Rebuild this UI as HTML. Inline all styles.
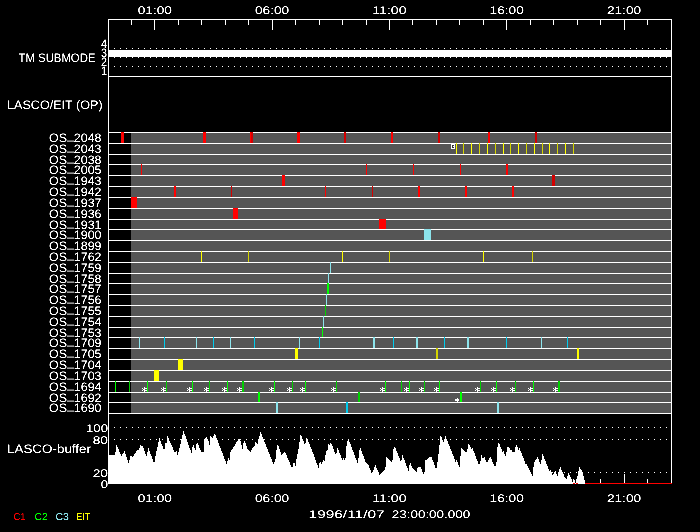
<!DOCTYPE html>
<html><head><meta charset="utf-8"><title>LASCO/EIT plan</title>
<style>html,body{margin:0;padding:0;background:#000;overflow:hidden}svg{display:block;will-change:transform}text{font-family:"Liberation Sans",sans-serif;text-rendering:geometricPrecision}</style></head>
<body><svg width="700" height="532" viewBox="0 0 700 532">
<rect width="700" height="532" fill="#000"/>
<g shape-rendering="crispEdges">
<rect x="131" y="132" width="540" height="281" fill="#555555"/>
<rect x="108" y="132" width="564" height="1" fill="#fff"/>
<rect x="108" y="143" width="564" height="1" fill="#fff"/>
<rect x="108" y="154" width="564" height="1" fill="#fff"/>
<rect x="108" y="164" width="564" height="1" fill="#fff"/>
<rect x="108" y="175" width="564" height="1" fill="#fff"/>
<rect x="108" y="186" width="564" height="1" fill="#fff"/>
<rect x="108" y="197" width="564" height="1" fill="#fff"/>
<rect x="108" y="208" width="564" height="1" fill="#fff"/>
<rect x="108" y="219" width="564" height="1" fill="#fff"/>
<rect x="108" y="229" width="564" height="1" fill="#fff"/>
<rect x="108" y="240" width="564" height="1" fill="#fff"/>
<rect x="108" y="251" width="564" height="1" fill="#fff"/>
<rect x="108" y="262" width="564" height="1" fill="#fff"/>
<rect x="108" y="273" width="564" height="1" fill="#fff"/>
<rect x="108" y="283" width="564" height="1" fill="#fff"/>
<rect x="108" y="294" width="564" height="1" fill="#fff"/>
<rect x="108" y="305" width="564" height="1" fill="#fff"/>
<rect x="108" y="316" width="564" height="1" fill="#fff"/>
<rect x="108" y="327" width="564" height="1" fill="#fff"/>
<rect x="108" y="337" width="564" height="1" fill="#fff"/>
<rect x="108" y="348" width="564" height="1" fill="#fff"/>
<rect x="108" y="359" width="564" height="1" fill="#fff"/>
<rect x="108" y="370" width="564" height="1" fill="#fff"/>
<rect x="108" y="381" width="564" height="1" fill="#fff"/>
<rect x="108" y="392" width="564" height="1" fill="#fff"/>
<rect x="108" y="402" width="564" height="1" fill="#fff"/>
<rect x="108" y="413" width="564" height="1" fill="#fff"/>
<rect x="121" y="132" width="3" height="11" fill="#ff0000"/>
<rect x="203" y="132" width="3" height="11" fill="#ff0000"/>
<rect x="250" y="132" width="1" height="11" fill="#ff0000"/>
<rect x="251" y="132" width="2" height="11" fill="#d40000"/>
<rect x="297" y="132" width="3" height="11" fill="#ff0000"/>
<rect x="344" y="132" width="2" height="11" fill="#d40000"/>
<rect x="391" y="132" width="2" height="11" fill="#ff0000"/>
<rect x="438" y="132" width="2" height="11" fill="#d40000"/>
<rect x="488" y="132" width="2" height="11" fill="#ff0000"/>
<rect x="535" y="132" width="2" height="11" fill="#d40000"/>
<rect x="141" y="164" width="1" height="11" fill="#ff0000"/>
<rect x="366" y="164" width="1" height="11" fill="#ff0000"/>
<rect x="413" y="164" width="1" height="11" fill="#ff0000"/>
<rect x="460" y="164" width="1" height="11" fill="#ff0000"/>
<rect x="506" y="164" width="2" height="11" fill="#ff0000"/>
<rect x="282" y="175" width="3" height="11" fill="#ff0000"/>
<rect x="552" y="175" width="3" height="11" fill="#d40000"/>
<rect x="174" y="186" width="2" height="11" fill="#ff0000"/>
<rect x="231" y="186" width="1" height="11" fill="#d40000"/>
<rect x="325" y="186" width="1" height="11" fill="#ff0000"/>
<rect x="372" y="186" width="1" height="11" fill="#d40000"/>
<rect x="418" y="186" width="2" height="11" fill="#ff0000"/>
<rect x="465" y="186" width="2" height="11" fill="#ff0000"/>
<rect x="512" y="186" width="2" height="11" fill="#ff0000"/>
<rect x="131" y="197" width="6" height="11" fill="#ff0000"/>
<rect x="233" y="208" width="5" height="11" fill="#ff0000"/>
<rect x="379" y="219" width="7" height="10" fill="#ff0000"/>
<rect x="424" y="229" width="7" height="11" fill="#8ce4ec"/>
<rect x="201" y="251" width="1" height="11" fill="#ffff00"/>
<rect x="248" y="251" width="1" height="11" fill="#d4d400"/>
<rect x="342" y="251" width="1" height="11" fill="#ffff00"/>
<rect x="389" y="251" width="1" height="11" fill="#d4d400"/>
<rect x="483" y="251" width="1" height="11" fill="#ffff00"/>
<rect x="532" y="251" width="1" height="11" fill="#d4d400"/>
<rect x="330" y="262" width="1" height="11" fill="#8ce4ec"/>
<rect x="328" y="273" width="1" height="10" fill="#8ce4ec"/>
<rect x="327" y="283" width="2" height="11" fill="#00ff00"/>
<rect x="326" y="294" width="1" height="11" fill="#8ce4ec"/>
<rect x="325" y="305" width="1" height="11" fill="#00d000"/>
<rect x="323" y="316" width="1" height="11" fill="#8ce4ec"/>
<rect x="322" y="327" width="1" height="10" fill="#00ff00"/>
<rect x="139" y="337" width="1" height="11" fill="#8ce4ec"/>
<rect x="164" y="337" width="1" height="11" fill="#00ccee"/>
<rect x="196" y="337" width="1" height="11" fill="#8ce4ec"/>
<rect x="213" y="337" width="1" height="11" fill="#00ccee"/>
<rect x="230" y="337" width="1" height="11" fill="#8ce4ec"/>
<rect x="254" y="337" width="1" height="11" fill="#00ccee"/>
<rect x="299" y="337" width="1" height="11" fill="#8ce4ec"/>
<rect x="319" y="337" width="1" height="11" fill="#00ccee"/>
<rect x="373" y="337" width="2" height="11" fill="#8ce4ec"/>
<rect x="393" y="337" width="1" height="11" fill="#00ccee"/>
<rect x="416" y="337" width="2" height="11" fill="#8ce4ec"/>
<rect x="444" y="337" width="1" height="11" fill="#00ccee"/>
<rect x="467" y="337" width="2" height="11" fill="#8ce4ec"/>
<rect x="506" y="337" width="1" height="11" fill="#00ccee"/>
<rect x="541" y="337" width="1" height="11" fill="#8ce4ec"/>
<rect x="567" y="337" width="1" height="11" fill="#00ccee"/>
<rect x="295" y="348" width="3" height="11" fill="#ffff00"/>
<rect x="436" y="348" width="2" height="11" fill="#d4d400"/>
<rect x="577" y="348" width="2" height="11" fill="#ffff00"/>
<rect x="178" y="359" width="5" height="11" fill="#ffff00"/>
<rect x="154" y="370" width="5" height="11" fill="#ffff00"/>
<rect x="258" y="392" width="2" height="10" fill="#00ff00"/>
<rect x="358" y="392" width="2" height="10" fill="#00d000"/>
<rect x="460" y="392" width="2" height="10" fill="#00ff00"/>
<rect x="276" y="402" width="2" height="11" fill="#8ce4ec"/>
<rect x="346" y="402" width="2" height="11" fill="#00ccee"/>
<rect x="497" y="402" width="2" height="11" fill="#8ce4ec"/>
<rect x="456" y="143" width="1" height="11" fill="#ffff00"/>
<rect x="463" y="143" width="1" height="11" fill="#d4d400"/>
<rect x="471" y="143" width="1" height="11" fill="#ffff00"/>
<rect x="479" y="143" width="1" height="11" fill="#d4d400"/>
<rect x="487" y="143" width="1" height="11" fill="#ffff00"/>
<rect x="495" y="143" width="1" height="11" fill="#d4d400"/>
<rect x="503" y="143" width="1" height="11" fill="#ffff00"/>
<rect x="510" y="143" width="1" height="11" fill="#d4d400"/>
<rect x="518" y="143" width="1" height="11" fill="#ffff00"/>
<rect x="526" y="143" width="1" height="11" fill="#d4d400"/>
<rect x="534" y="143" width="1" height="11" fill="#ffff00"/>
<rect x="542" y="143" width="1" height="11" fill="#d4d400"/>
<rect x="549" y="143" width="1" height="11" fill="#ffff00"/>
<rect x="557" y="143" width="1" height="11" fill="#d4d400"/>
<rect x="565" y="143" width="1" height="11" fill="#ffff00"/>
<rect x="573" y="143" width="1" height="11" fill="#d4d400"/>
<rect x="115" y="381" width="1" height="11" fill="#00ff00"/>
<rect x="129" y="381" width="1" height="11" fill="#00d000"/>
<rect x="147" y="381" width="1" height="11" fill="#00ff00"/>
<rect x="166" y="381" width="1" height="11" fill="#00d000"/>
<rect x="192" y="381" width="1" height="11" fill="#00ff00"/>
<rect x="209" y="381" width="1" height="11" fill="#00d000"/>
<rect x="227" y="381" width="1" height="11" fill="#00ff00"/>
<rect x="242" y="381" width="2" height="11" fill="#00d000"/>
<rect x="274" y="381" width="1" height="11" fill="#00ff00"/>
<rect x="292" y="381" width="1" height="11" fill="#00d000"/>
<rect x="305" y="381" width="1" height="11" fill="#00ff00"/>
<rect x="336" y="381" width="1" height="11" fill="#00d000"/>
<rect x="385" y="381" width="1" height="11" fill="#00ff00"/>
<rect x="401" y="381" width="1" height="11" fill="#00d000"/>
<rect x="409" y="381" width="1" height="11" fill="#00ff00"/>
<rect x="424" y="381" width="1" height="11" fill="#00d000"/>
<rect x="439" y="381" width="1" height="11" fill="#00ff00"/>
<rect x="480" y="381" width="1" height="11" fill="#00d000"/>
<rect x="496" y="381" width="1" height="11" fill="#00ff00"/>
<rect x="515" y="381" width="1" height="11" fill="#00d000"/>
<rect x="533" y="381" width="1" height="11" fill="#00ff00"/>
<rect x="558" y="381" width="2" height="11" fill="#00d000"/>
<rect x="144" y="387" width="1" height="1" fill="#fff"/>
<rect x="142" y="388" width="1" height="1" fill="#fff"/>
<rect x="144" y="388" width="1" height="1" fill="#fff"/>
<rect x="145" y="388" width="1" height="1" fill="#fff"/>
<rect x="146" y="388" width="1" height="1" fill="#fff"/>
<rect x="143" y="389" width="1" height="1" fill="#fff"/>
<rect x="144" y="389" width="1" height="1" fill="#fff"/>
<rect x="142" y="390" width="1" height="1" fill="#fff"/>
<rect x="144" y="390" width="1" height="1" fill="#fff"/>
<rect x="145" y="390" width="1" height="1" fill="#fff"/>
<rect x="146" y="390" width="1" height="1" fill="#fff"/>
<rect x="144" y="391" width="1" height="1" fill="#fff"/>
<rect x="163" y="387" width="1" height="1" fill="#fff"/>
<rect x="161" y="388" width="1" height="1" fill="#fff"/>
<rect x="163" y="388" width="1" height="1" fill="#fff"/>
<rect x="164" y="388" width="1" height="1" fill="#fff"/>
<rect x="165" y="388" width="1" height="1" fill="#fff"/>
<rect x="162" y="389" width="1" height="1" fill="#fff"/>
<rect x="163" y="389" width="1" height="1" fill="#fff"/>
<rect x="161" y="390" width="1" height="1" fill="#fff"/>
<rect x="163" y="390" width="1" height="1" fill="#fff"/>
<rect x="164" y="390" width="1" height="1" fill="#fff"/>
<rect x="165" y="390" width="1" height="1" fill="#fff"/>
<rect x="163" y="391" width="1" height="1" fill="#fff"/>
<rect x="189" y="387" width="1" height="1" fill="#fff"/>
<rect x="187" y="388" width="1" height="1" fill="#fff"/>
<rect x="189" y="388" width="1" height="1" fill="#fff"/>
<rect x="190" y="388" width="1" height="1" fill="#fff"/>
<rect x="191" y="388" width="1" height="1" fill="#fff"/>
<rect x="188" y="389" width="1" height="1" fill="#fff"/>
<rect x="189" y="389" width="1" height="1" fill="#fff"/>
<rect x="187" y="390" width="1" height="1" fill="#fff"/>
<rect x="189" y="390" width="1" height="1" fill="#fff"/>
<rect x="190" y="390" width="1" height="1" fill="#fff"/>
<rect x="191" y="390" width="1" height="1" fill="#fff"/>
<rect x="189" y="391" width="1" height="1" fill="#fff"/>
<rect x="206" y="387" width="1" height="1" fill="#fff"/>
<rect x="204" y="388" width="1" height="1" fill="#fff"/>
<rect x="206" y="388" width="1" height="1" fill="#fff"/>
<rect x="207" y="388" width="1" height="1" fill="#fff"/>
<rect x="208" y="388" width="1" height="1" fill="#fff"/>
<rect x="205" y="389" width="1" height="1" fill="#fff"/>
<rect x="206" y="389" width="1" height="1" fill="#fff"/>
<rect x="204" y="390" width="1" height="1" fill="#fff"/>
<rect x="206" y="390" width="1" height="1" fill="#fff"/>
<rect x="207" y="390" width="1" height="1" fill="#fff"/>
<rect x="208" y="390" width="1" height="1" fill="#fff"/>
<rect x="206" y="391" width="1" height="1" fill="#fff"/>
<rect x="224" y="387" width="1" height="1" fill="#fff"/>
<rect x="222" y="388" width="1" height="1" fill="#fff"/>
<rect x="224" y="388" width="1" height="1" fill="#fff"/>
<rect x="225" y="388" width="1" height="1" fill="#fff"/>
<rect x="226" y="388" width="1" height="1" fill="#fff"/>
<rect x="223" y="389" width="1" height="1" fill="#fff"/>
<rect x="224" y="389" width="1" height="1" fill="#fff"/>
<rect x="222" y="390" width="1" height="1" fill="#fff"/>
<rect x="224" y="390" width="1" height="1" fill="#fff"/>
<rect x="225" y="390" width="1" height="1" fill="#fff"/>
<rect x="226" y="390" width="1" height="1" fill="#fff"/>
<rect x="224" y="391" width="1" height="1" fill="#fff"/>
<rect x="239" y="387" width="1" height="1" fill="#fff"/>
<rect x="237" y="388" width="1" height="1" fill="#fff"/>
<rect x="239" y="388" width="1" height="1" fill="#fff"/>
<rect x="240" y="388" width="1" height="1" fill="#fff"/>
<rect x="241" y="388" width="1" height="1" fill="#fff"/>
<rect x="238" y="389" width="1" height="1" fill="#fff"/>
<rect x="239" y="389" width="1" height="1" fill="#fff"/>
<rect x="237" y="390" width="1" height="1" fill="#fff"/>
<rect x="239" y="390" width="1" height="1" fill="#fff"/>
<rect x="240" y="390" width="1" height="1" fill="#fff"/>
<rect x="241" y="390" width="1" height="1" fill="#fff"/>
<rect x="239" y="391" width="1" height="1" fill="#fff"/>
<rect x="271" y="387" width="1" height="1" fill="#fff"/>
<rect x="269" y="388" width="1" height="1" fill="#fff"/>
<rect x="271" y="388" width="1" height="1" fill="#fff"/>
<rect x="272" y="388" width="1" height="1" fill="#fff"/>
<rect x="273" y="388" width="1" height="1" fill="#fff"/>
<rect x="270" y="389" width="1" height="1" fill="#fff"/>
<rect x="271" y="389" width="1" height="1" fill="#fff"/>
<rect x="269" y="390" width="1" height="1" fill="#fff"/>
<rect x="271" y="390" width="1" height="1" fill="#fff"/>
<rect x="272" y="390" width="1" height="1" fill="#fff"/>
<rect x="273" y="390" width="1" height="1" fill="#fff"/>
<rect x="271" y="391" width="1" height="1" fill="#fff"/>
<rect x="289" y="387" width="1" height="1" fill="#fff"/>
<rect x="287" y="388" width="1" height="1" fill="#fff"/>
<rect x="289" y="388" width="1" height="1" fill="#fff"/>
<rect x="290" y="388" width="1" height="1" fill="#fff"/>
<rect x="291" y="388" width="1" height="1" fill="#fff"/>
<rect x="288" y="389" width="1" height="1" fill="#fff"/>
<rect x="289" y="389" width="1" height="1" fill="#fff"/>
<rect x="287" y="390" width="1" height="1" fill="#fff"/>
<rect x="289" y="390" width="1" height="1" fill="#fff"/>
<rect x="290" y="390" width="1" height="1" fill="#fff"/>
<rect x="291" y="390" width="1" height="1" fill="#fff"/>
<rect x="289" y="391" width="1" height="1" fill="#fff"/>
<rect x="302" y="387" width="1" height="1" fill="#fff"/>
<rect x="300" y="388" width="1" height="1" fill="#fff"/>
<rect x="302" y="388" width="1" height="1" fill="#fff"/>
<rect x="303" y="388" width="1" height="1" fill="#fff"/>
<rect x="304" y="388" width="1" height="1" fill="#fff"/>
<rect x="301" y="389" width="1" height="1" fill="#fff"/>
<rect x="302" y="389" width="1" height="1" fill="#fff"/>
<rect x="300" y="390" width="1" height="1" fill="#fff"/>
<rect x="302" y="390" width="1" height="1" fill="#fff"/>
<rect x="303" y="390" width="1" height="1" fill="#fff"/>
<rect x="304" y="390" width="1" height="1" fill="#fff"/>
<rect x="302" y="391" width="1" height="1" fill="#fff"/>
<rect x="333" y="387" width="1" height="1" fill="#fff"/>
<rect x="331" y="388" width="1" height="1" fill="#fff"/>
<rect x="333" y="388" width="1" height="1" fill="#fff"/>
<rect x="334" y="388" width="1" height="1" fill="#fff"/>
<rect x="335" y="388" width="1" height="1" fill="#fff"/>
<rect x="332" y="389" width="1" height="1" fill="#fff"/>
<rect x="333" y="389" width="1" height="1" fill="#fff"/>
<rect x="331" y="390" width="1" height="1" fill="#fff"/>
<rect x="333" y="390" width="1" height="1" fill="#fff"/>
<rect x="334" y="390" width="1" height="1" fill="#fff"/>
<rect x="335" y="390" width="1" height="1" fill="#fff"/>
<rect x="333" y="391" width="1" height="1" fill="#fff"/>
<rect x="382" y="387" width="1" height="1" fill="#fff"/>
<rect x="380" y="388" width="1" height="1" fill="#fff"/>
<rect x="382" y="388" width="1" height="1" fill="#fff"/>
<rect x="383" y="388" width="1" height="1" fill="#fff"/>
<rect x="384" y="388" width="1" height="1" fill="#fff"/>
<rect x="381" y="389" width="1" height="1" fill="#fff"/>
<rect x="382" y="389" width="1" height="1" fill="#fff"/>
<rect x="380" y="390" width="1" height="1" fill="#fff"/>
<rect x="382" y="390" width="1" height="1" fill="#fff"/>
<rect x="383" y="390" width="1" height="1" fill="#fff"/>
<rect x="384" y="390" width="1" height="1" fill="#fff"/>
<rect x="382" y="391" width="1" height="1" fill="#fff"/>
<rect x="406" y="387" width="1" height="1" fill="#fff"/>
<rect x="404" y="388" width="1" height="1" fill="#fff"/>
<rect x="406" y="388" width="1" height="1" fill="#fff"/>
<rect x="407" y="388" width="1" height="1" fill="#fff"/>
<rect x="408" y="388" width="1" height="1" fill="#fff"/>
<rect x="405" y="389" width="1" height="1" fill="#fff"/>
<rect x="406" y="389" width="1" height="1" fill="#fff"/>
<rect x="404" y="390" width="1" height="1" fill="#fff"/>
<rect x="406" y="390" width="1" height="1" fill="#fff"/>
<rect x="407" y="390" width="1" height="1" fill="#fff"/>
<rect x="408" y="390" width="1" height="1" fill="#fff"/>
<rect x="406" y="391" width="1" height="1" fill="#fff"/>
<rect x="421" y="387" width="1" height="1" fill="#fff"/>
<rect x="419" y="388" width="1" height="1" fill="#fff"/>
<rect x="421" y="388" width="1" height="1" fill="#fff"/>
<rect x="422" y="388" width="1" height="1" fill="#fff"/>
<rect x="423" y="388" width="1" height="1" fill="#fff"/>
<rect x="420" y="389" width="1" height="1" fill="#fff"/>
<rect x="421" y="389" width="1" height="1" fill="#fff"/>
<rect x="419" y="390" width="1" height="1" fill="#fff"/>
<rect x="421" y="390" width="1" height="1" fill="#fff"/>
<rect x="422" y="390" width="1" height="1" fill="#fff"/>
<rect x="423" y="390" width="1" height="1" fill="#fff"/>
<rect x="421" y="391" width="1" height="1" fill="#fff"/>
<rect x="436" y="387" width="1" height="1" fill="#fff"/>
<rect x="434" y="388" width="1" height="1" fill="#fff"/>
<rect x="436" y="388" width="1" height="1" fill="#fff"/>
<rect x="437" y="388" width="1" height="1" fill="#fff"/>
<rect x="438" y="388" width="1" height="1" fill="#fff"/>
<rect x="435" y="389" width="1" height="1" fill="#fff"/>
<rect x="436" y="389" width="1" height="1" fill="#fff"/>
<rect x="434" y="390" width="1" height="1" fill="#fff"/>
<rect x="436" y="390" width="1" height="1" fill="#fff"/>
<rect x="437" y="390" width="1" height="1" fill="#fff"/>
<rect x="438" y="390" width="1" height="1" fill="#fff"/>
<rect x="436" y="391" width="1" height="1" fill="#fff"/>
<rect x="477" y="387" width="1" height="1" fill="#fff"/>
<rect x="475" y="388" width="1" height="1" fill="#fff"/>
<rect x="477" y="388" width="1" height="1" fill="#fff"/>
<rect x="478" y="388" width="1" height="1" fill="#fff"/>
<rect x="479" y="388" width="1" height="1" fill="#fff"/>
<rect x="476" y="389" width="1" height="1" fill="#fff"/>
<rect x="477" y="389" width="1" height="1" fill="#fff"/>
<rect x="475" y="390" width="1" height="1" fill="#fff"/>
<rect x="477" y="390" width="1" height="1" fill="#fff"/>
<rect x="478" y="390" width="1" height="1" fill="#fff"/>
<rect x="479" y="390" width="1" height="1" fill="#fff"/>
<rect x="477" y="391" width="1" height="1" fill="#fff"/>
<rect x="493" y="387" width="1" height="1" fill="#fff"/>
<rect x="491" y="388" width="1" height="1" fill="#fff"/>
<rect x="493" y="388" width="1" height="1" fill="#fff"/>
<rect x="494" y="388" width="1" height="1" fill="#fff"/>
<rect x="495" y="388" width="1" height="1" fill="#fff"/>
<rect x="492" y="389" width="1" height="1" fill="#fff"/>
<rect x="493" y="389" width="1" height="1" fill="#fff"/>
<rect x="491" y="390" width="1" height="1" fill="#fff"/>
<rect x="493" y="390" width="1" height="1" fill="#fff"/>
<rect x="494" y="390" width="1" height="1" fill="#fff"/>
<rect x="495" y="390" width="1" height="1" fill="#fff"/>
<rect x="493" y="391" width="1" height="1" fill="#fff"/>
<rect x="512" y="387" width="1" height="1" fill="#fff"/>
<rect x="510" y="388" width="1" height="1" fill="#fff"/>
<rect x="512" y="388" width="1" height="1" fill="#fff"/>
<rect x="513" y="388" width="1" height="1" fill="#fff"/>
<rect x="514" y="388" width="1" height="1" fill="#fff"/>
<rect x="511" y="389" width="1" height="1" fill="#fff"/>
<rect x="512" y="389" width="1" height="1" fill="#fff"/>
<rect x="510" y="390" width="1" height="1" fill="#fff"/>
<rect x="512" y="390" width="1" height="1" fill="#fff"/>
<rect x="513" y="390" width="1" height="1" fill="#fff"/>
<rect x="514" y="390" width="1" height="1" fill="#fff"/>
<rect x="512" y="391" width="1" height="1" fill="#fff"/>
<rect x="530" y="387" width="1" height="1" fill="#fff"/>
<rect x="528" y="388" width="1" height="1" fill="#fff"/>
<rect x="530" y="388" width="1" height="1" fill="#fff"/>
<rect x="531" y="388" width="1" height="1" fill="#fff"/>
<rect x="532" y="388" width="1" height="1" fill="#fff"/>
<rect x="529" y="389" width="1" height="1" fill="#fff"/>
<rect x="530" y="389" width="1" height="1" fill="#fff"/>
<rect x="528" y="390" width="1" height="1" fill="#fff"/>
<rect x="530" y="390" width="1" height="1" fill="#fff"/>
<rect x="531" y="390" width="1" height="1" fill="#fff"/>
<rect x="532" y="390" width="1" height="1" fill="#fff"/>
<rect x="530" y="391" width="1" height="1" fill="#fff"/>
<rect x="555" y="387" width="1" height="1" fill="#fff"/>
<rect x="553" y="388" width="1" height="1" fill="#fff"/>
<rect x="555" y="388" width="1" height="1" fill="#fff"/>
<rect x="556" y="388" width="1" height="1" fill="#fff"/>
<rect x="557" y="388" width="1" height="1" fill="#fff"/>
<rect x="554" y="389" width="1" height="1" fill="#fff"/>
<rect x="555" y="389" width="1" height="1" fill="#fff"/>
<rect x="553" y="390" width="1" height="1" fill="#fff"/>
<rect x="555" y="390" width="1" height="1" fill="#fff"/>
<rect x="556" y="390" width="1" height="1" fill="#fff"/>
<rect x="557" y="390" width="1" height="1" fill="#fff"/>
<rect x="555" y="391" width="1" height="1" fill="#fff"/>
<rect x="451" y="144" width="4" height="5" fill="#fff"/>
<rect x="452" y="145" width="2" height="3" fill="#333"/>
<rect x="453" y="146" width="1" height="1" fill="#fff"/>
<rect x="457" y="398" width="1" height="1" fill="#fff"/>
<rect x="455" y="399" width="1" height="1" fill="#fff"/>
<rect x="456" y="399" width="1" height="1" fill="#fff"/>
<rect x="457" y="399" width="1" height="1" fill="#fff"/>
<rect x="458" y="399" width="1" height="1" fill="#fff"/>
<rect x="455" y="400" width="1" height="1" fill="#fff"/>
<rect x="456" y="400" width="1" height="1" fill="#fff"/>
<rect x="457" y="400" width="1" height="1" fill="#fff"/>
<rect x="458" y="400" width="1" height="1" fill="#fff"/>
<rect x="457" y="401" width="1" height="1" fill="#fff"/>
<rect x="108" y="19" width="1" height="465" fill="#fff"/>
<rect x="671" y="19" width="1" height="465" fill="#fff"/>
<rect x="108" y="19" width="564" height="1" fill="#fff"/>
<rect x="108" y="76" width="564" height="1" fill="#fff"/>
<rect x="131" y="20" width="1" height="5" fill="#fff"/>
<rect x="131" y="479" width="1" height="4" fill="#fff"/>
<rect x="154" y="20" width="1" height="10" fill="#fff"/>
<rect x="154" y="474" width="1" height="9" fill="#fff"/>
<rect x="178" y="20" width="1" height="5" fill="#fff"/>
<rect x="178" y="479" width="1" height="4" fill="#fff"/>
<rect x="201" y="20" width="1" height="5" fill="#fff"/>
<rect x="201" y="479" width="1" height="4" fill="#fff"/>
<rect x="225" y="20" width="1" height="5" fill="#fff"/>
<rect x="225" y="479" width="1" height="4" fill="#fff"/>
<rect x="248" y="20" width="1" height="5" fill="#fff"/>
<rect x="248" y="479" width="1" height="4" fill="#fff"/>
<rect x="272" y="20" width="1" height="10" fill="#fff"/>
<rect x="272" y="474" width="1" height="9" fill="#fff"/>
<rect x="295" y="20" width="1" height="5" fill="#fff"/>
<rect x="295" y="479" width="1" height="4" fill="#fff"/>
<rect x="319" y="20" width="1" height="5" fill="#fff"/>
<rect x="319" y="479" width="1" height="4" fill="#fff"/>
<rect x="342" y="20" width="1" height="5" fill="#fff"/>
<rect x="342" y="479" width="1" height="4" fill="#fff"/>
<rect x="366" y="20" width="1" height="5" fill="#fff"/>
<rect x="366" y="479" width="1" height="4" fill="#fff"/>
<rect x="389" y="20" width="1" height="10" fill="#fff"/>
<rect x="389" y="474" width="1" height="9" fill="#fff"/>
<rect x="412" y="20" width="1" height="5" fill="#fff"/>
<rect x="412" y="479" width="1" height="4" fill="#fff"/>
<rect x="436" y="20" width="1" height="5" fill="#fff"/>
<rect x="436" y="479" width="1" height="4" fill="#fff"/>
<rect x="459" y="20" width="1" height="5" fill="#fff"/>
<rect x="459" y="479" width="1" height="4" fill="#fff"/>
<rect x="483" y="20" width="1" height="5" fill="#fff"/>
<rect x="483" y="479" width="1" height="4" fill="#fff"/>
<rect x="506" y="20" width="1" height="10" fill="#fff"/>
<rect x="506" y="474" width="1" height="9" fill="#fff"/>
<rect x="530" y="20" width="1" height="5" fill="#fff"/>
<rect x="530" y="479" width="1" height="4" fill="#fff"/>
<rect x="553" y="20" width="1" height="5" fill="#fff"/>
<rect x="553" y="479" width="1" height="4" fill="#fff"/>
<rect x="577" y="20" width="1" height="5" fill="#fff"/>
<rect x="577" y="479" width="1" height="4" fill="#fff"/>
<rect x="600" y="20" width="1" height="5" fill="#fff"/>
<rect x="600" y="479" width="1" height="4" fill="#fff"/>
<rect x="624" y="20" width="1" height="10" fill="#fff"/>
<rect x="624" y="474" width="1" height="9" fill="#fff"/>
<rect x="647" y="20" width="1" height="5" fill="#fff"/>
<rect x="647" y="479" width="1" height="4" fill="#fff"/>
<rect x="109" y="50" width="562" height="7" fill="#fff"/>
<rect x="114" y="48" width="1" height="1" fill="#fff"/>
<rect x="114" y="57" width="1" height="1" fill="#fff"/>
<rect x="114" y="66" width="1" height="1" fill="#fff"/>
<rect x="114" y="427" width="1" height="1" fill="#fff"/>
<rect x="114" y="439" width="1" height="1" fill="#fff"/>
<rect x="114" y="472" width="1" height="1" fill="#fff"/>
<rect x="120" y="48" width="1" height="1" fill="#fff"/>
<rect x="120" y="57" width="1" height="1" fill="#fff"/>
<rect x="120" y="66" width="1" height="1" fill="#fff"/>
<rect x="120" y="427" width="1" height="1" fill="#fff"/>
<rect x="120" y="439" width="1" height="1" fill="#fff"/>
<rect x="120" y="472" width="1" height="1" fill="#fff"/>
<rect x="126" y="48" width="1" height="1" fill="#fff"/>
<rect x="126" y="57" width="1" height="1" fill="#fff"/>
<rect x="126" y="66" width="1" height="1" fill="#fff"/>
<rect x="126" y="427" width="1" height="1" fill="#fff"/>
<rect x="126" y="439" width="1" height="1" fill="#fff"/>
<rect x="126" y="472" width="1" height="1" fill="#fff"/>
<rect x="132" y="48" width="1" height="1" fill="#fff"/>
<rect x="132" y="57" width="1" height="1" fill="#fff"/>
<rect x="132" y="66" width="1" height="1" fill="#fff"/>
<rect x="132" y="427" width="1" height="1" fill="#fff"/>
<rect x="132" y="439" width="1" height="1" fill="#fff"/>
<rect x="132" y="472" width="1" height="1" fill="#fff"/>
<rect x="138" y="48" width="1" height="1" fill="#fff"/>
<rect x="138" y="57" width="1" height="1" fill="#fff"/>
<rect x="138" y="66" width="1" height="1" fill="#fff"/>
<rect x="138" y="427" width="1" height="1" fill="#fff"/>
<rect x="138" y="439" width="1" height="1" fill="#fff"/>
<rect x="138" y="472" width="1" height="1" fill="#fff"/>
<rect x="144" y="48" width="1" height="1" fill="#fff"/>
<rect x="144" y="57" width="1" height="1" fill="#fff"/>
<rect x="144" y="66" width="1" height="1" fill="#fff"/>
<rect x="144" y="427" width="1" height="1" fill="#fff"/>
<rect x="144" y="439" width="1" height="1" fill="#fff"/>
<rect x="144" y="472" width="1" height="1" fill="#fff"/>
<rect x="150" y="48" width="1" height="1" fill="#fff"/>
<rect x="150" y="57" width="1" height="1" fill="#fff"/>
<rect x="150" y="66" width="1" height="1" fill="#fff"/>
<rect x="150" y="427" width="1" height="1" fill="#fff"/>
<rect x="150" y="439" width="1" height="1" fill="#fff"/>
<rect x="150" y="472" width="1" height="1" fill="#fff"/>
<rect x="156" y="48" width="1" height="1" fill="#fff"/>
<rect x="156" y="57" width="1" height="1" fill="#fff"/>
<rect x="156" y="66" width="1" height="1" fill="#fff"/>
<rect x="156" y="427" width="1" height="1" fill="#fff"/>
<rect x="156" y="439" width="1" height="1" fill="#fff"/>
<rect x="156" y="472" width="1" height="1" fill="#fff"/>
<rect x="162" y="48" width="1" height="1" fill="#fff"/>
<rect x="162" y="57" width="1" height="1" fill="#fff"/>
<rect x="162" y="66" width="1" height="1" fill="#fff"/>
<rect x="162" y="427" width="1" height="1" fill="#fff"/>
<rect x="162" y="439" width="1" height="1" fill="#fff"/>
<rect x="162" y="472" width="1" height="1" fill="#fff"/>
<rect x="168" y="48" width="1" height="1" fill="#fff"/>
<rect x="168" y="57" width="1" height="1" fill="#fff"/>
<rect x="168" y="66" width="1" height="1" fill="#fff"/>
<rect x="168" y="427" width="1" height="1" fill="#fff"/>
<rect x="168" y="439" width="1" height="1" fill="#fff"/>
<rect x="168" y="472" width="1" height="1" fill="#fff"/>
<rect x="174" y="48" width="1" height="1" fill="#fff"/>
<rect x="174" y="57" width="1" height="1" fill="#fff"/>
<rect x="174" y="66" width="1" height="1" fill="#fff"/>
<rect x="174" y="427" width="1" height="1" fill="#fff"/>
<rect x="174" y="439" width="1" height="1" fill="#fff"/>
<rect x="174" y="472" width="1" height="1" fill="#fff"/>
<rect x="180" y="48" width="1" height="1" fill="#fff"/>
<rect x="180" y="57" width="1" height="1" fill="#fff"/>
<rect x="180" y="66" width="1" height="1" fill="#fff"/>
<rect x="180" y="427" width="1" height="1" fill="#fff"/>
<rect x="180" y="439" width="1" height="1" fill="#fff"/>
<rect x="180" y="472" width="1" height="1" fill="#fff"/>
<rect x="186" y="48" width="1" height="1" fill="#fff"/>
<rect x="186" y="57" width="1" height="1" fill="#fff"/>
<rect x="186" y="66" width="1" height="1" fill="#fff"/>
<rect x="186" y="427" width="1" height="1" fill="#fff"/>
<rect x="186" y="439" width="1" height="1" fill="#fff"/>
<rect x="186" y="472" width="1" height="1" fill="#fff"/>
<rect x="192" y="48" width="1" height="1" fill="#fff"/>
<rect x="192" y="57" width="1" height="1" fill="#fff"/>
<rect x="192" y="66" width="1" height="1" fill="#fff"/>
<rect x="192" y="427" width="1" height="1" fill="#fff"/>
<rect x="192" y="439" width="1" height="1" fill="#fff"/>
<rect x="192" y="472" width="1" height="1" fill="#fff"/>
<rect x="198" y="48" width="1" height="1" fill="#fff"/>
<rect x="198" y="57" width="1" height="1" fill="#fff"/>
<rect x="198" y="66" width="1" height="1" fill="#fff"/>
<rect x="198" y="427" width="1" height="1" fill="#fff"/>
<rect x="198" y="439" width="1" height="1" fill="#fff"/>
<rect x="198" y="472" width="1" height="1" fill="#fff"/>
<rect x="204" y="48" width="1" height="1" fill="#fff"/>
<rect x="204" y="57" width="1" height="1" fill="#fff"/>
<rect x="204" y="66" width="1" height="1" fill="#fff"/>
<rect x="204" y="427" width="1" height="1" fill="#fff"/>
<rect x="204" y="439" width="1" height="1" fill="#fff"/>
<rect x="204" y="472" width="1" height="1" fill="#fff"/>
<rect x="210" y="48" width="1" height="1" fill="#fff"/>
<rect x="210" y="57" width="1" height="1" fill="#fff"/>
<rect x="210" y="66" width="1" height="1" fill="#fff"/>
<rect x="210" y="427" width="1" height="1" fill="#fff"/>
<rect x="210" y="439" width="1" height="1" fill="#fff"/>
<rect x="210" y="472" width="1" height="1" fill="#fff"/>
<rect x="216" y="48" width="1" height="1" fill="#fff"/>
<rect x="216" y="57" width="1" height="1" fill="#fff"/>
<rect x="216" y="66" width="1" height="1" fill="#fff"/>
<rect x="216" y="427" width="1" height="1" fill="#fff"/>
<rect x="216" y="439" width="1" height="1" fill="#fff"/>
<rect x="216" y="472" width="1" height="1" fill="#fff"/>
<rect x="222" y="48" width="1" height="1" fill="#fff"/>
<rect x="222" y="57" width="1" height="1" fill="#fff"/>
<rect x="222" y="66" width="1" height="1" fill="#fff"/>
<rect x="222" y="427" width="1" height="1" fill="#fff"/>
<rect x="222" y="439" width="1" height="1" fill="#fff"/>
<rect x="222" y="472" width="1" height="1" fill="#fff"/>
<rect x="228" y="48" width="1" height="1" fill="#fff"/>
<rect x="228" y="57" width="1" height="1" fill="#fff"/>
<rect x="228" y="66" width="1" height="1" fill="#fff"/>
<rect x="228" y="427" width="1" height="1" fill="#fff"/>
<rect x="228" y="439" width="1" height="1" fill="#fff"/>
<rect x="228" y="472" width="1" height="1" fill="#fff"/>
<rect x="234" y="48" width="1" height="1" fill="#fff"/>
<rect x="234" y="57" width="1" height="1" fill="#fff"/>
<rect x="234" y="66" width="1" height="1" fill="#fff"/>
<rect x="234" y="427" width="1" height="1" fill="#fff"/>
<rect x="234" y="439" width="1" height="1" fill="#fff"/>
<rect x="234" y="472" width="1" height="1" fill="#fff"/>
<rect x="240" y="48" width="1" height="1" fill="#fff"/>
<rect x="240" y="57" width="1" height="1" fill="#fff"/>
<rect x="240" y="66" width="1" height="1" fill="#fff"/>
<rect x="240" y="427" width="1" height="1" fill="#fff"/>
<rect x="240" y="439" width="1" height="1" fill="#fff"/>
<rect x="240" y="472" width="1" height="1" fill="#fff"/>
<rect x="246" y="48" width="1" height="1" fill="#fff"/>
<rect x="246" y="57" width="1" height="1" fill="#fff"/>
<rect x="246" y="66" width="1" height="1" fill="#fff"/>
<rect x="246" y="427" width="1" height="1" fill="#fff"/>
<rect x="246" y="439" width="1" height="1" fill="#fff"/>
<rect x="246" y="472" width="1" height="1" fill="#fff"/>
<rect x="252" y="48" width="1" height="1" fill="#fff"/>
<rect x="252" y="57" width="1" height="1" fill="#fff"/>
<rect x="252" y="66" width="1" height="1" fill="#fff"/>
<rect x="252" y="427" width="1" height="1" fill="#fff"/>
<rect x="252" y="439" width="1" height="1" fill="#fff"/>
<rect x="252" y="472" width="1" height="1" fill="#fff"/>
<rect x="258" y="48" width="1" height="1" fill="#fff"/>
<rect x="258" y="57" width="1" height="1" fill="#fff"/>
<rect x="258" y="66" width="1" height="1" fill="#fff"/>
<rect x="258" y="427" width="1" height="1" fill="#fff"/>
<rect x="258" y="439" width="1" height="1" fill="#fff"/>
<rect x="258" y="472" width="1" height="1" fill="#fff"/>
<rect x="264" y="48" width="1" height="1" fill="#fff"/>
<rect x="264" y="57" width="1" height="1" fill="#fff"/>
<rect x="264" y="66" width="1" height="1" fill="#fff"/>
<rect x="264" y="427" width="1" height="1" fill="#fff"/>
<rect x="264" y="439" width="1" height="1" fill="#fff"/>
<rect x="264" y="472" width="1" height="1" fill="#fff"/>
<rect x="270" y="48" width="1" height="1" fill="#fff"/>
<rect x="270" y="57" width="1" height="1" fill="#fff"/>
<rect x="270" y="66" width="1" height="1" fill="#fff"/>
<rect x="270" y="427" width="1" height="1" fill="#fff"/>
<rect x="270" y="439" width="1" height="1" fill="#fff"/>
<rect x="270" y="472" width="1" height="1" fill="#fff"/>
<rect x="276" y="48" width="1" height="1" fill="#fff"/>
<rect x="276" y="57" width="1" height="1" fill="#fff"/>
<rect x="276" y="66" width="1" height="1" fill="#fff"/>
<rect x="276" y="427" width="1" height="1" fill="#fff"/>
<rect x="276" y="439" width="1" height="1" fill="#fff"/>
<rect x="276" y="472" width="1" height="1" fill="#fff"/>
<rect x="282" y="48" width="1" height="1" fill="#fff"/>
<rect x="282" y="57" width="1" height="1" fill="#fff"/>
<rect x="282" y="66" width="1" height="1" fill="#fff"/>
<rect x="282" y="427" width="1" height="1" fill="#fff"/>
<rect x="282" y="439" width="1" height="1" fill="#fff"/>
<rect x="282" y="472" width="1" height="1" fill="#fff"/>
<rect x="288" y="48" width="1" height="1" fill="#fff"/>
<rect x="288" y="57" width="1" height="1" fill="#fff"/>
<rect x="288" y="66" width="1" height="1" fill="#fff"/>
<rect x="288" y="427" width="1" height="1" fill="#fff"/>
<rect x="288" y="439" width="1" height="1" fill="#fff"/>
<rect x="288" y="472" width="1" height="1" fill="#fff"/>
<rect x="294" y="48" width="1" height="1" fill="#fff"/>
<rect x="294" y="57" width="1" height="1" fill="#fff"/>
<rect x="294" y="66" width="1" height="1" fill="#fff"/>
<rect x="294" y="427" width="1" height="1" fill="#fff"/>
<rect x="294" y="439" width="1" height="1" fill="#fff"/>
<rect x="294" y="472" width="1" height="1" fill="#fff"/>
<rect x="300" y="48" width="1" height="1" fill="#fff"/>
<rect x="300" y="57" width="1" height="1" fill="#fff"/>
<rect x="300" y="66" width="1" height="1" fill="#fff"/>
<rect x="300" y="427" width="1" height="1" fill="#fff"/>
<rect x="300" y="439" width="1" height="1" fill="#fff"/>
<rect x="300" y="472" width="1" height="1" fill="#fff"/>
<rect x="306" y="48" width="1" height="1" fill="#fff"/>
<rect x="306" y="57" width="1" height="1" fill="#fff"/>
<rect x="306" y="66" width="1" height="1" fill="#fff"/>
<rect x="306" y="427" width="1" height="1" fill="#fff"/>
<rect x="306" y="439" width="1" height="1" fill="#fff"/>
<rect x="306" y="472" width="1" height="1" fill="#fff"/>
<rect x="312" y="48" width="1" height="1" fill="#fff"/>
<rect x="312" y="57" width="1" height="1" fill="#fff"/>
<rect x="312" y="66" width="1" height="1" fill="#fff"/>
<rect x="312" y="427" width="1" height="1" fill="#fff"/>
<rect x="312" y="439" width="1" height="1" fill="#fff"/>
<rect x="312" y="472" width="1" height="1" fill="#fff"/>
<rect x="318" y="48" width="1" height="1" fill="#fff"/>
<rect x="318" y="57" width="1" height="1" fill="#fff"/>
<rect x="318" y="66" width="1" height="1" fill="#fff"/>
<rect x="318" y="427" width="1" height="1" fill="#fff"/>
<rect x="318" y="439" width="1" height="1" fill="#fff"/>
<rect x="318" y="472" width="1" height="1" fill="#fff"/>
<rect x="324" y="48" width="1" height="1" fill="#fff"/>
<rect x="324" y="57" width="1" height="1" fill="#fff"/>
<rect x="324" y="66" width="1" height="1" fill="#fff"/>
<rect x="324" y="427" width="1" height="1" fill="#fff"/>
<rect x="324" y="439" width="1" height="1" fill="#fff"/>
<rect x="324" y="472" width="1" height="1" fill="#fff"/>
<rect x="330" y="48" width="1" height="1" fill="#fff"/>
<rect x="330" y="57" width="1" height="1" fill="#fff"/>
<rect x="330" y="66" width="1" height="1" fill="#fff"/>
<rect x="330" y="427" width="1" height="1" fill="#fff"/>
<rect x="330" y="439" width="1" height="1" fill="#fff"/>
<rect x="330" y="472" width="1" height="1" fill="#fff"/>
<rect x="336" y="48" width="1" height="1" fill="#fff"/>
<rect x="336" y="57" width="1" height="1" fill="#fff"/>
<rect x="336" y="66" width="1" height="1" fill="#fff"/>
<rect x="336" y="427" width="1" height="1" fill="#fff"/>
<rect x="336" y="439" width="1" height="1" fill="#fff"/>
<rect x="336" y="472" width="1" height="1" fill="#fff"/>
<rect x="342" y="48" width="1" height="1" fill="#fff"/>
<rect x="342" y="57" width="1" height="1" fill="#fff"/>
<rect x="342" y="66" width="1" height="1" fill="#fff"/>
<rect x="342" y="427" width="1" height="1" fill="#fff"/>
<rect x="342" y="439" width="1" height="1" fill="#fff"/>
<rect x="342" y="472" width="1" height="1" fill="#fff"/>
<rect x="348" y="48" width="1" height="1" fill="#fff"/>
<rect x="348" y="57" width="1" height="1" fill="#fff"/>
<rect x="348" y="66" width="1" height="1" fill="#fff"/>
<rect x="348" y="427" width="1" height="1" fill="#fff"/>
<rect x="348" y="439" width="1" height="1" fill="#fff"/>
<rect x="348" y="472" width="1" height="1" fill="#fff"/>
<rect x="354" y="48" width="1" height="1" fill="#fff"/>
<rect x="354" y="57" width="1" height="1" fill="#fff"/>
<rect x="354" y="66" width="1" height="1" fill="#fff"/>
<rect x="354" y="427" width="1" height="1" fill="#fff"/>
<rect x="354" y="439" width="1" height="1" fill="#fff"/>
<rect x="354" y="472" width="1" height="1" fill="#fff"/>
<rect x="360" y="48" width="1" height="1" fill="#fff"/>
<rect x="360" y="57" width="1" height="1" fill="#fff"/>
<rect x="360" y="66" width="1" height="1" fill="#fff"/>
<rect x="360" y="427" width="1" height="1" fill="#fff"/>
<rect x="360" y="439" width="1" height="1" fill="#fff"/>
<rect x="360" y="472" width="1" height="1" fill="#fff"/>
<rect x="366" y="48" width="1" height="1" fill="#fff"/>
<rect x="366" y="57" width="1" height="1" fill="#fff"/>
<rect x="366" y="66" width="1" height="1" fill="#fff"/>
<rect x="366" y="427" width="1" height="1" fill="#fff"/>
<rect x="366" y="439" width="1" height="1" fill="#fff"/>
<rect x="366" y="472" width="1" height="1" fill="#fff"/>
<rect x="372" y="48" width="1" height="1" fill="#fff"/>
<rect x="372" y="57" width="1" height="1" fill="#fff"/>
<rect x="372" y="66" width="1" height="1" fill="#fff"/>
<rect x="372" y="427" width="1" height="1" fill="#fff"/>
<rect x="372" y="439" width="1" height="1" fill="#fff"/>
<rect x="372" y="472" width="1" height="1" fill="#fff"/>
<rect x="378" y="48" width="1" height="1" fill="#fff"/>
<rect x="378" y="57" width="1" height="1" fill="#fff"/>
<rect x="378" y="66" width="1" height="1" fill="#fff"/>
<rect x="378" y="427" width="1" height="1" fill="#fff"/>
<rect x="378" y="439" width="1" height="1" fill="#fff"/>
<rect x="378" y="472" width="1" height="1" fill="#fff"/>
<rect x="384" y="48" width="1" height="1" fill="#fff"/>
<rect x="384" y="57" width="1" height="1" fill="#fff"/>
<rect x="384" y="66" width="1" height="1" fill="#fff"/>
<rect x="384" y="427" width="1" height="1" fill="#fff"/>
<rect x="384" y="439" width="1" height="1" fill="#fff"/>
<rect x="384" y="472" width="1" height="1" fill="#fff"/>
<rect x="390" y="48" width="1" height="1" fill="#fff"/>
<rect x="390" y="57" width="1" height="1" fill="#fff"/>
<rect x="390" y="66" width="1" height="1" fill="#fff"/>
<rect x="390" y="427" width="1" height="1" fill="#fff"/>
<rect x="390" y="439" width="1" height="1" fill="#fff"/>
<rect x="390" y="472" width="1" height="1" fill="#fff"/>
<rect x="396" y="48" width="1" height="1" fill="#fff"/>
<rect x="396" y="57" width="1" height="1" fill="#fff"/>
<rect x="396" y="66" width="1" height="1" fill="#fff"/>
<rect x="396" y="427" width="1" height="1" fill="#fff"/>
<rect x="396" y="439" width="1" height="1" fill="#fff"/>
<rect x="396" y="472" width="1" height="1" fill="#fff"/>
<rect x="402" y="48" width="1" height="1" fill="#fff"/>
<rect x="402" y="57" width="1" height="1" fill="#fff"/>
<rect x="402" y="66" width="1" height="1" fill="#fff"/>
<rect x="402" y="427" width="1" height="1" fill="#fff"/>
<rect x="402" y="439" width="1" height="1" fill="#fff"/>
<rect x="402" y="472" width="1" height="1" fill="#fff"/>
<rect x="408" y="48" width="1" height="1" fill="#fff"/>
<rect x="408" y="57" width="1" height="1" fill="#fff"/>
<rect x="408" y="66" width="1" height="1" fill="#fff"/>
<rect x="408" y="427" width="1" height="1" fill="#fff"/>
<rect x="408" y="439" width="1" height="1" fill="#fff"/>
<rect x="408" y="472" width="1" height="1" fill="#fff"/>
<rect x="414" y="48" width="1" height="1" fill="#fff"/>
<rect x="414" y="57" width="1" height="1" fill="#fff"/>
<rect x="414" y="66" width="1" height="1" fill="#fff"/>
<rect x="414" y="427" width="1" height="1" fill="#fff"/>
<rect x="414" y="439" width="1" height="1" fill="#fff"/>
<rect x="414" y="472" width="1" height="1" fill="#fff"/>
<rect x="420" y="48" width="1" height="1" fill="#fff"/>
<rect x="420" y="57" width="1" height="1" fill="#fff"/>
<rect x="420" y="66" width="1" height="1" fill="#fff"/>
<rect x="420" y="427" width="1" height="1" fill="#fff"/>
<rect x="420" y="439" width="1" height="1" fill="#fff"/>
<rect x="420" y="472" width="1" height="1" fill="#fff"/>
<rect x="426" y="48" width="1" height="1" fill="#fff"/>
<rect x="426" y="57" width="1" height="1" fill="#fff"/>
<rect x="426" y="66" width="1" height="1" fill="#fff"/>
<rect x="426" y="427" width="1" height="1" fill="#fff"/>
<rect x="426" y="439" width="1" height="1" fill="#fff"/>
<rect x="426" y="472" width="1" height="1" fill="#fff"/>
<rect x="432" y="48" width="1" height="1" fill="#fff"/>
<rect x="432" y="57" width="1" height="1" fill="#fff"/>
<rect x="432" y="66" width="1" height="1" fill="#fff"/>
<rect x="432" y="427" width="1" height="1" fill="#fff"/>
<rect x="432" y="439" width="1" height="1" fill="#fff"/>
<rect x="432" y="472" width="1" height="1" fill="#fff"/>
<rect x="438" y="48" width="1" height="1" fill="#fff"/>
<rect x="438" y="57" width="1" height="1" fill="#fff"/>
<rect x="438" y="66" width="1" height="1" fill="#fff"/>
<rect x="438" y="427" width="1" height="1" fill="#fff"/>
<rect x="438" y="439" width="1" height="1" fill="#fff"/>
<rect x="438" y="472" width="1" height="1" fill="#fff"/>
<rect x="444" y="48" width="1" height="1" fill="#fff"/>
<rect x="444" y="57" width="1" height="1" fill="#fff"/>
<rect x="444" y="66" width="1" height="1" fill="#fff"/>
<rect x="444" y="427" width="1" height="1" fill="#fff"/>
<rect x="444" y="439" width="1" height="1" fill="#fff"/>
<rect x="444" y="472" width="1" height="1" fill="#fff"/>
<rect x="450" y="48" width="1" height="1" fill="#fff"/>
<rect x="450" y="57" width="1" height="1" fill="#fff"/>
<rect x="450" y="66" width="1" height="1" fill="#fff"/>
<rect x="450" y="427" width="1" height="1" fill="#fff"/>
<rect x="450" y="439" width="1" height="1" fill="#fff"/>
<rect x="450" y="472" width="1" height="1" fill="#fff"/>
<rect x="456" y="48" width="1" height="1" fill="#fff"/>
<rect x="456" y="57" width="1" height="1" fill="#fff"/>
<rect x="456" y="66" width="1" height="1" fill="#fff"/>
<rect x="456" y="427" width="1" height="1" fill="#fff"/>
<rect x="456" y="439" width="1" height="1" fill="#fff"/>
<rect x="456" y="472" width="1" height="1" fill="#fff"/>
<rect x="462" y="48" width="1" height="1" fill="#fff"/>
<rect x="462" y="57" width="1" height="1" fill="#fff"/>
<rect x="462" y="66" width="1" height="1" fill="#fff"/>
<rect x="462" y="427" width="1" height="1" fill="#fff"/>
<rect x="462" y="439" width="1" height="1" fill="#fff"/>
<rect x="462" y="472" width="1" height="1" fill="#fff"/>
<rect x="468" y="48" width="1" height="1" fill="#fff"/>
<rect x="468" y="57" width="1" height="1" fill="#fff"/>
<rect x="468" y="66" width="1" height="1" fill="#fff"/>
<rect x="468" y="427" width="1" height="1" fill="#fff"/>
<rect x="468" y="439" width="1" height="1" fill="#fff"/>
<rect x="468" y="472" width="1" height="1" fill="#fff"/>
<rect x="474" y="48" width="1" height="1" fill="#fff"/>
<rect x="474" y="57" width="1" height="1" fill="#fff"/>
<rect x="474" y="66" width="1" height="1" fill="#fff"/>
<rect x="474" y="427" width="1" height="1" fill="#fff"/>
<rect x="474" y="439" width="1" height="1" fill="#fff"/>
<rect x="474" y="472" width="1" height="1" fill="#fff"/>
<rect x="480" y="48" width="1" height="1" fill="#fff"/>
<rect x="480" y="57" width="1" height="1" fill="#fff"/>
<rect x="480" y="66" width="1" height="1" fill="#fff"/>
<rect x="480" y="427" width="1" height="1" fill="#fff"/>
<rect x="480" y="439" width="1" height="1" fill="#fff"/>
<rect x="480" y="472" width="1" height="1" fill="#fff"/>
<rect x="486" y="48" width="1" height="1" fill="#fff"/>
<rect x="486" y="57" width="1" height="1" fill="#fff"/>
<rect x="486" y="66" width="1" height="1" fill="#fff"/>
<rect x="486" y="427" width="1" height="1" fill="#fff"/>
<rect x="486" y="439" width="1" height="1" fill="#fff"/>
<rect x="486" y="472" width="1" height="1" fill="#fff"/>
<rect x="492" y="48" width="1" height="1" fill="#fff"/>
<rect x="492" y="57" width="1" height="1" fill="#fff"/>
<rect x="492" y="66" width="1" height="1" fill="#fff"/>
<rect x="492" y="427" width="1" height="1" fill="#fff"/>
<rect x="492" y="439" width="1" height="1" fill="#fff"/>
<rect x="492" y="472" width="1" height="1" fill="#fff"/>
<rect x="498" y="48" width="1" height="1" fill="#fff"/>
<rect x="498" y="57" width="1" height="1" fill="#fff"/>
<rect x="498" y="66" width="1" height="1" fill="#fff"/>
<rect x="498" y="427" width="1" height="1" fill="#fff"/>
<rect x="498" y="439" width="1" height="1" fill="#fff"/>
<rect x="498" y="472" width="1" height="1" fill="#fff"/>
<rect x="504" y="48" width="1" height="1" fill="#fff"/>
<rect x="504" y="57" width="1" height="1" fill="#fff"/>
<rect x="504" y="66" width="1" height="1" fill="#fff"/>
<rect x="504" y="427" width="1" height="1" fill="#fff"/>
<rect x="504" y="439" width="1" height="1" fill="#fff"/>
<rect x="504" y="472" width="1" height="1" fill="#fff"/>
<rect x="510" y="48" width="1" height="1" fill="#fff"/>
<rect x="510" y="57" width="1" height="1" fill="#fff"/>
<rect x="510" y="66" width="1" height="1" fill="#fff"/>
<rect x="510" y="427" width="1" height="1" fill="#fff"/>
<rect x="510" y="439" width="1" height="1" fill="#fff"/>
<rect x="510" y="472" width="1" height="1" fill="#fff"/>
<rect x="516" y="48" width="1" height="1" fill="#fff"/>
<rect x="516" y="57" width="1" height="1" fill="#fff"/>
<rect x="516" y="66" width="1" height="1" fill="#fff"/>
<rect x="516" y="427" width="1" height="1" fill="#fff"/>
<rect x="516" y="439" width="1" height="1" fill="#fff"/>
<rect x="516" y="472" width="1" height="1" fill="#fff"/>
<rect x="522" y="48" width="1" height="1" fill="#fff"/>
<rect x="522" y="57" width="1" height="1" fill="#fff"/>
<rect x="522" y="66" width="1" height="1" fill="#fff"/>
<rect x="522" y="427" width="1" height="1" fill="#fff"/>
<rect x="522" y="439" width="1" height="1" fill="#fff"/>
<rect x="522" y="472" width="1" height="1" fill="#fff"/>
<rect x="528" y="48" width="1" height="1" fill="#fff"/>
<rect x="528" y="57" width="1" height="1" fill="#fff"/>
<rect x="528" y="66" width="1" height="1" fill="#fff"/>
<rect x="528" y="427" width="1" height="1" fill="#fff"/>
<rect x="528" y="439" width="1" height="1" fill="#fff"/>
<rect x="528" y="472" width="1" height="1" fill="#fff"/>
<rect x="534" y="48" width="1" height="1" fill="#fff"/>
<rect x="534" y="57" width="1" height="1" fill="#fff"/>
<rect x="534" y="66" width="1" height="1" fill="#fff"/>
<rect x="534" y="427" width="1" height="1" fill="#fff"/>
<rect x="534" y="439" width="1" height="1" fill="#fff"/>
<rect x="534" y="472" width="1" height="1" fill="#fff"/>
<rect x="540" y="48" width="1" height="1" fill="#fff"/>
<rect x="540" y="57" width="1" height="1" fill="#fff"/>
<rect x="540" y="66" width="1" height="1" fill="#fff"/>
<rect x="540" y="427" width="1" height="1" fill="#fff"/>
<rect x="540" y="439" width="1" height="1" fill="#fff"/>
<rect x="540" y="472" width="1" height="1" fill="#fff"/>
<rect x="546" y="48" width="1" height="1" fill="#fff"/>
<rect x="546" y="57" width="1" height="1" fill="#fff"/>
<rect x="546" y="66" width="1" height="1" fill="#fff"/>
<rect x="546" y="427" width="1" height="1" fill="#fff"/>
<rect x="546" y="439" width="1" height="1" fill="#fff"/>
<rect x="546" y="472" width="1" height="1" fill="#fff"/>
<rect x="552" y="48" width="1" height="1" fill="#fff"/>
<rect x="552" y="57" width="1" height="1" fill="#fff"/>
<rect x="552" y="66" width="1" height="1" fill="#fff"/>
<rect x="552" y="427" width="1" height="1" fill="#fff"/>
<rect x="552" y="439" width="1" height="1" fill="#fff"/>
<rect x="552" y="472" width="1" height="1" fill="#fff"/>
<rect x="558" y="48" width="1" height="1" fill="#fff"/>
<rect x="558" y="57" width="1" height="1" fill="#fff"/>
<rect x="558" y="66" width="1" height="1" fill="#fff"/>
<rect x="558" y="427" width="1" height="1" fill="#fff"/>
<rect x="558" y="439" width="1" height="1" fill="#fff"/>
<rect x="558" y="472" width="1" height="1" fill="#fff"/>
<rect x="564" y="48" width="1" height="1" fill="#fff"/>
<rect x="564" y="57" width="1" height="1" fill="#fff"/>
<rect x="564" y="66" width="1" height="1" fill="#fff"/>
<rect x="564" y="427" width="1" height="1" fill="#fff"/>
<rect x="564" y="439" width="1" height="1" fill="#fff"/>
<rect x="564" y="472" width="1" height="1" fill="#fff"/>
<rect x="570" y="48" width="1" height="1" fill="#fff"/>
<rect x="570" y="57" width="1" height="1" fill="#fff"/>
<rect x="570" y="66" width="1" height="1" fill="#fff"/>
<rect x="570" y="427" width="1" height="1" fill="#fff"/>
<rect x="570" y="439" width="1" height="1" fill="#fff"/>
<rect x="570" y="472" width="1" height="1" fill="#fff"/>
<rect x="576" y="48" width="1" height="1" fill="#fff"/>
<rect x="576" y="57" width="1" height="1" fill="#fff"/>
<rect x="576" y="66" width="1" height="1" fill="#fff"/>
<rect x="576" y="427" width="1" height="1" fill="#fff"/>
<rect x="576" y="439" width="1" height="1" fill="#fff"/>
<rect x="576" y="472" width="1" height="1" fill="#fff"/>
<rect x="582" y="48" width="1" height="1" fill="#fff"/>
<rect x="582" y="57" width="1" height="1" fill="#fff"/>
<rect x="582" y="66" width="1" height="1" fill="#fff"/>
<rect x="582" y="427" width="1" height="1" fill="#fff"/>
<rect x="582" y="439" width="1" height="1" fill="#fff"/>
<rect x="582" y="472" width="1" height="1" fill="#fff"/>
<rect x="588" y="48" width="1" height="1" fill="#fff"/>
<rect x="588" y="57" width="1" height="1" fill="#fff"/>
<rect x="588" y="66" width="1" height="1" fill="#fff"/>
<rect x="588" y="427" width="1" height="1" fill="#fff"/>
<rect x="588" y="439" width="1" height="1" fill="#fff"/>
<rect x="588" y="472" width="1" height="1" fill="#fff"/>
<rect x="594" y="48" width="1" height="1" fill="#fff"/>
<rect x="594" y="57" width="1" height="1" fill="#fff"/>
<rect x="594" y="66" width="1" height="1" fill="#fff"/>
<rect x="594" y="427" width="1" height="1" fill="#fff"/>
<rect x="594" y="439" width="1" height="1" fill="#fff"/>
<rect x="594" y="472" width="1" height="1" fill="#fff"/>
<rect x="600" y="48" width="1" height="1" fill="#fff"/>
<rect x="600" y="57" width="1" height="1" fill="#fff"/>
<rect x="600" y="66" width="1" height="1" fill="#fff"/>
<rect x="600" y="427" width="1" height="1" fill="#fff"/>
<rect x="600" y="439" width="1" height="1" fill="#fff"/>
<rect x="600" y="472" width="1" height="1" fill="#fff"/>
<rect x="606" y="48" width="1" height="1" fill="#fff"/>
<rect x="606" y="57" width="1" height="1" fill="#fff"/>
<rect x="606" y="66" width="1" height="1" fill="#fff"/>
<rect x="606" y="427" width="1" height="1" fill="#fff"/>
<rect x="606" y="439" width="1" height="1" fill="#fff"/>
<rect x="606" y="472" width="1" height="1" fill="#fff"/>
<rect x="612" y="48" width="1" height="1" fill="#fff"/>
<rect x="612" y="57" width="1" height="1" fill="#fff"/>
<rect x="612" y="66" width="1" height="1" fill="#fff"/>
<rect x="612" y="427" width="1" height="1" fill="#fff"/>
<rect x="612" y="439" width="1" height="1" fill="#fff"/>
<rect x="612" y="472" width="1" height="1" fill="#fff"/>
<rect x="618" y="48" width="1" height="1" fill="#fff"/>
<rect x="618" y="57" width="1" height="1" fill="#fff"/>
<rect x="618" y="66" width="1" height="1" fill="#fff"/>
<rect x="618" y="427" width="1" height="1" fill="#fff"/>
<rect x="618" y="439" width="1" height="1" fill="#fff"/>
<rect x="618" y="472" width="1" height="1" fill="#fff"/>
<rect x="624" y="48" width="1" height="1" fill="#fff"/>
<rect x="624" y="57" width="1" height="1" fill="#fff"/>
<rect x="624" y="66" width="1" height="1" fill="#fff"/>
<rect x="624" y="427" width="1" height="1" fill="#fff"/>
<rect x="624" y="439" width="1" height="1" fill="#fff"/>
<rect x="624" y="472" width="1" height="1" fill="#fff"/>
<rect x="630" y="48" width="1" height="1" fill="#fff"/>
<rect x="630" y="57" width="1" height="1" fill="#fff"/>
<rect x="630" y="66" width="1" height="1" fill="#fff"/>
<rect x="630" y="427" width="1" height="1" fill="#fff"/>
<rect x="630" y="439" width="1" height="1" fill="#fff"/>
<rect x="630" y="472" width="1" height="1" fill="#fff"/>
<rect x="636" y="48" width="1" height="1" fill="#fff"/>
<rect x="636" y="57" width="1" height="1" fill="#fff"/>
<rect x="636" y="66" width="1" height="1" fill="#fff"/>
<rect x="636" y="427" width="1" height="1" fill="#fff"/>
<rect x="636" y="439" width="1" height="1" fill="#fff"/>
<rect x="636" y="472" width="1" height="1" fill="#fff"/>
<rect x="642" y="48" width="1" height="1" fill="#fff"/>
<rect x="642" y="57" width="1" height="1" fill="#fff"/>
<rect x="642" y="66" width="1" height="1" fill="#fff"/>
<rect x="642" y="427" width="1" height="1" fill="#fff"/>
<rect x="642" y="439" width="1" height="1" fill="#fff"/>
<rect x="642" y="472" width="1" height="1" fill="#fff"/>
<rect x="648" y="48" width="1" height="1" fill="#fff"/>
<rect x="648" y="57" width="1" height="1" fill="#fff"/>
<rect x="648" y="66" width="1" height="1" fill="#fff"/>
<rect x="648" y="427" width="1" height="1" fill="#fff"/>
<rect x="648" y="439" width="1" height="1" fill="#fff"/>
<rect x="648" y="472" width="1" height="1" fill="#fff"/>
<rect x="654" y="48" width="1" height="1" fill="#fff"/>
<rect x="654" y="57" width="1" height="1" fill="#fff"/>
<rect x="654" y="66" width="1" height="1" fill="#fff"/>
<rect x="654" y="427" width="1" height="1" fill="#fff"/>
<rect x="654" y="439" width="1" height="1" fill="#fff"/>
<rect x="654" y="472" width="1" height="1" fill="#fff"/>
<rect x="660" y="48" width="1" height="1" fill="#fff"/>
<rect x="660" y="57" width="1" height="1" fill="#fff"/>
<rect x="660" y="66" width="1" height="1" fill="#fff"/>
<rect x="660" y="427" width="1" height="1" fill="#fff"/>
<rect x="660" y="439" width="1" height="1" fill="#fff"/>
<rect x="660" y="472" width="1" height="1" fill="#fff"/>
<rect x="666" y="48" width="1" height="1" fill="#fff"/>
<rect x="666" y="57" width="1" height="1" fill="#fff"/>
<rect x="666" y="66" width="1" height="1" fill="#fff"/>
<rect x="666" y="427" width="1" height="1" fill="#fff"/>
<rect x="666" y="439" width="1" height="1" fill="#fff"/>
<rect x="666" y="472" width="1" height="1" fill="#fff"/>
<path d="M109 483V455H110V455H111V455H112V455H113V455H114V455H115V452H116V445H117V447H118V449H119V452H120V454H121V456H122V454H123V453H124V451H125V454H126V457H127V460H128V463H129V460H130V456H131V456H132V457H133V456H134V454H135V453H136V451H137V450H138V450H139V448H140V445H141V446H142V446H143V448H144V451H145V454H146V456H147V452H148V448H149V451H150V454H151V456H152V459H153V462H154V462H155V456H156V451H157V447H158V442H159V438H160V441H161V444H162V446H163V449H164V449H165V443H166V443H167V436H168V438H169V441H170V443H171V445H172V447H173V450H174V452H175V452H176V451H177V455H178V452H179V448H180V444H181V439H182V435H183V431H184V434H185V436H186V439H187V442H188V445H189V448H190V450H191V453H192V447H193V445H194V448H195V450H196V444H197V443H198V445H199V448H200V450H201V452H202V452H203V452H204V440H205V438H206V437H207V439H208V441H209V445H210V436H211V437H212V438H213V436H214V434H215V435H216V438H217V440H218V443H219V446H220V448H221V451H222V453H223V456H224V459H225V461H226V464H227V461H228V458H229V460H230V452H231V450H232V449H233V447H234V446H235V444H236V442H237V441H238V439H239V439H240V441H241V445H242V449H243V443H244V441H245V443H246V446H247V449H248V450H249V451H250V452H251V450H252V448H253V447H254V446H255V442H256V443H257V444H258V440H259V436H260V432H261V434H262V437H263V439H264V442H265V444H266V447H267V449H268V452H269V454H270V457H271V459H272V462H273V464H274V462H275V459H276V450H277V445H278V446H279V449H280V452H281V455H282V454H283V453H284V452H285V453H286V455H287V458H288V460H289V462H290V465H291V467H292V467H293V463H294V463H295V466H296V459H297V454H298V449H299V442H300V435H301V436H302V439H303V441H304V444H305V443H306V438H307V439H308V442H309V444H310V447H311V449H312V452H313V454H314V457H315V460H316V463H317V465H318V468H319V463H320V462H321V464H322V462H323V460H324V461H325V455H326V451H327V450H328V444H329V445H330V443H331V444H332V446H333V449H334V452H335V454H336V453H337V448H338V450H339V453H340V455H341V458H342V460H343V458H344V460H345V458H346V446H347V441H348V439H349V442H350V444H351V447H352V450H353V452H354V455H355V458H356V460H357V463H358V458H359V450H360V448H361V451H362V454H363V456H364V459H365V462H366V463H367V464H368V465H369V468H370V470H371V473H372V472H373V470H374V467H375V465H376V468H377V470H378V472H379V475H380V474H381V473H382V472H383V471H384V470H385V467H386V457H387V458H388V459H389V460H390V461H391V462H392V460H393V449H394V447H395V448H396V451H397V453H398V456H399V458H400V461H401V460H402V455H403V458H404V460H405V463H406V466H407V468H408V471H409V465H410V463H411V466H412V468H413V469H414V470H415V471H416V472H417V468H418V467H419V467H420V467H421V469H422V472H423V474H424V472H425V460H426V460H427V459H428V458H429V457H430V457H431V457H432V460H433V462H434V465H435V468H436V468H437V462H438V454H439V445H440V436H441V437H442V440H443V442H444V439H445V436H446V439H447V441H448V444H449V446H450V449H451V451H452V454H453V456H454V459H455V462H456V460H457V462H458V465H459V467H460V456H461V448H462V449H463V450H464V451H465V452H466V452H467V449H468V444H469V445H470V447H471V449H472V448H473V451H474V453H475V456H476V459H477V461H478V464H479V464H480V461H481V455H482V458H483V458H484V457H485V460H486V462H487V462H488V460H489V458H490V457H491V459H492V462H493V464H494V466H495V466H496V462H497V447H498V443H499V444H500V447H501V449H502V452H503V451H504V454H505V456H506V452H507V447H508V447H509V448H510V450H511V450H512V452H513V452H514V452H515V447H516V445H517V447H518V450H519V448H520V451H521V453H522V456H523V458H524V461H525V464H526V464H527V466H528V468H529V470H530V472H531V474H532V476H533V467H534V462H535V460H536V459H537V457H538V459H539V462H540V464H541V460H542V454H543V456H544V459H545V461H546V464H547V466H548V469H549V471H550V470H551V472H552V475H553V474H554V472H555V471H556V474H557V476H558V473H559V469H560V467H561V470H562V472H563V474H564V477H565V478H566V479H567V476H568V473H569V475H570V477H571V479H572V482H573V479H574V480H575V483H576V479H577V476H578V471H579V467H580V469H581V470H582V472H583V476H584V480H585V483H586V483Z" fill="#fff"/>
<rect x="108" y="483" width="465" height="1" fill="#fff"/>
<rect x="573" y="483" width="99" height="1" fill="#ff0000"/>
<rect x="575" y="483" width="1" height="1" fill="#fff"/>
<rect x="578" y="483" width="7" height="1" fill="#fff"/>
</g>
<defs><filter id="crisp" x="0" y="0" width="100%" height="100%" filterUnits="userSpaceOnUse" color-interpolation-filters="sRGB"><feComponentTransfer><feFuncA type="linear" slope="2.4" intercept="-0.6"/></feComponentTransfer></filter></defs>
<g filter="url(#crisp)">
<text x="137.7" y="14" font-size="11" fill="#fff" textLength="34.20000000000002" lengthAdjust="spacingAndGlyphs">01:00</text>
<text x="137.7" y="502" font-size="11" fill="#fff" textLength="34.20000000000002" lengthAdjust="spacingAndGlyphs">01:00</text>
<text x="255.0" y="14" font-size="11" fill="#fff" textLength="34.19999999999999" lengthAdjust="spacingAndGlyphs">06:00</text>
<text x="255.0" y="502" font-size="11" fill="#fff" textLength="34.19999999999999" lengthAdjust="spacingAndGlyphs">06:00</text>
<text x="372.3" y="14" font-size="11" fill="#fff" textLength="34.19999999999999" lengthAdjust="spacingAndGlyphs">11:00</text>
<text x="372.3" y="502" font-size="11" fill="#fff" textLength="34.19999999999999" lengthAdjust="spacingAndGlyphs">11:00</text>
<text x="489.6" y="14" font-size="11" fill="#fff" textLength="34.19999999999993" lengthAdjust="spacingAndGlyphs">16:00</text>
<text x="489.6" y="502" font-size="11" fill="#fff" textLength="34.19999999999993" lengthAdjust="spacingAndGlyphs">16:00</text>
<text x="606.9" y="14" font-size="11" fill="#fff" textLength="34.200000000000045" lengthAdjust="spacingAndGlyphs">21:00</text>
<text x="606.9" y="502" font-size="11" fill="#fff" textLength="34.200000000000045" lengthAdjust="spacingAndGlyphs">21:00</text>
<text x="18.5" y="62" font-size="12.3" fill="#fff" textLength="77.0" lengthAdjust="spacingAndGlyphs">TM SUBMODE</text>
<text x="7" y="109" font-size="12.3" fill="#fff" textLength="95.6" lengthAdjust="spacingAndGlyphs">LASCO/EIT (OP)</text>
<text x="49" y="142" font-size="12.3" fill="#fff" textLength="52.5" lengthAdjust="spacingAndGlyphs">OS<tspan dy="-2.55">_</tspan><tspan dy="2.55">2048</tspan></text>
<text x="49" y="153" font-size="12.3" fill="#fff" textLength="52.5" lengthAdjust="spacingAndGlyphs">OS<tspan dy="-2.55">_</tspan><tspan dy="2.55">2043</tspan></text>
<text x="49" y="164" font-size="12.3" fill="#fff" textLength="52.5" lengthAdjust="spacingAndGlyphs">OS<tspan dy="-2.55">_</tspan><tspan dy="2.55">2038</tspan></text>
<text x="49" y="174" font-size="12.3" fill="#fff" textLength="52.5" lengthAdjust="spacingAndGlyphs">OS<tspan dy="-2.55">_</tspan><tspan dy="2.55">2005</tspan></text>
<text x="49" y="185" font-size="12.3" fill="#fff" textLength="52.5" lengthAdjust="spacingAndGlyphs">OS<tspan dy="-2.55">_</tspan><tspan dy="2.55">1943</tspan></text>
<text x="49" y="196" font-size="12.3" fill="#fff" textLength="52.5" lengthAdjust="spacingAndGlyphs">OS<tspan dy="-2.55">_</tspan><tspan dy="2.55">1942</tspan></text>
<text x="49" y="207" font-size="12.3" fill="#fff" textLength="52.5" lengthAdjust="spacingAndGlyphs">OS<tspan dy="-2.55">_</tspan><tspan dy="2.55">1937</tspan></text>
<text x="49" y="218" font-size="12.3" fill="#fff" textLength="52.5" lengthAdjust="spacingAndGlyphs">OS<tspan dy="-2.55">_</tspan><tspan dy="2.55">1936</tspan></text>
<text x="49" y="229" font-size="12.3" fill="#fff" textLength="52.5" lengthAdjust="spacingAndGlyphs">OS<tspan dy="-2.55">_</tspan><tspan dy="2.55">1931</tspan></text>
<text x="49" y="239" font-size="12.3" fill="#fff" textLength="52.5" lengthAdjust="spacingAndGlyphs">OS<tspan dy="-2.55">_</tspan><tspan dy="2.55">1900</tspan></text>
<text x="49" y="250" font-size="12.3" fill="#fff" textLength="52.5" lengthAdjust="spacingAndGlyphs">OS<tspan dy="-2.55">_</tspan><tspan dy="2.55">1899</tspan></text>
<text x="49" y="261" font-size="12.3" fill="#fff" textLength="52.5" lengthAdjust="spacingAndGlyphs">OS<tspan dy="-2.55">_</tspan><tspan dy="2.55">1762</tspan></text>
<text x="49" y="272" font-size="12.3" fill="#fff" textLength="52.5" lengthAdjust="spacingAndGlyphs">OS<tspan dy="-2.55">_</tspan><tspan dy="2.55">1759</tspan></text>
<text x="49" y="283" font-size="12.3" fill="#fff" textLength="52.5" lengthAdjust="spacingAndGlyphs">OS<tspan dy="-2.55">_</tspan><tspan dy="2.55">1758</tspan></text>
<text x="49" y="293" font-size="12.3" fill="#fff" textLength="52.5" lengthAdjust="spacingAndGlyphs">OS<tspan dy="-2.55">_</tspan><tspan dy="2.55">1757</tspan></text>
<text x="49" y="304" font-size="12.3" fill="#fff" textLength="52.5" lengthAdjust="spacingAndGlyphs">OS<tspan dy="-2.55">_</tspan><tspan dy="2.55">1756</tspan></text>
<text x="49" y="315" font-size="12.3" fill="#fff" textLength="52.5" lengthAdjust="spacingAndGlyphs">OS<tspan dy="-2.55">_</tspan><tspan dy="2.55">1755</tspan></text>
<text x="49" y="326" font-size="12.3" fill="#fff" textLength="52.5" lengthAdjust="spacingAndGlyphs">OS<tspan dy="-2.55">_</tspan><tspan dy="2.55">1754</tspan></text>
<text x="49" y="337" font-size="12.3" fill="#fff" textLength="52.5" lengthAdjust="spacingAndGlyphs">OS<tspan dy="-2.55">_</tspan><tspan dy="2.55">1753</tspan></text>
<text x="49" y="347" font-size="12.3" fill="#fff" textLength="52.5" lengthAdjust="spacingAndGlyphs">OS<tspan dy="-2.55">_</tspan><tspan dy="2.55">1709</tspan></text>
<text x="49" y="358" font-size="12.3" fill="#fff" textLength="52.5" lengthAdjust="spacingAndGlyphs">OS<tspan dy="-2.55">_</tspan><tspan dy="2.55">1705</tspan></text>
<text x="49" y="369" font-size="12.3" fill="#fff" textLength="52.5" lengthAdjust="spacingAndGlyphs">OS<tspan dy="-2.55">_</tspan><tspan dy="2.55">1704</tspan></text>
<text x="49" y="380" font-size="12.3" fill="#fff" textLength="52.5" lengthAdjust="spacingAndGlyphs">OS<tspan dy="-2.55">_</tspan><tspan dy="2.55">1703</tspan></text>
<text x="49" y="391" font-size="12.3" fill="#fff" textLength="52.5" lengthAdjust="spacingAndGlyphs">OS<tspan dy="-2.55">_</tspan><tspan dy="2.55">1694</tspan></text>
<text x="49" y="402" font-size="12.3" fill="#fff" textLength="52.5" lengthAdjust="spacingAndGlyphs">OS<tspan dy="-2.55">_</tspan><tspan dy="2.55">1692</tspan></text>
<text x="49" y="412" font-size="12.3" fill="#fff" textLength="52.5" lengthAdjust="spacingAndGlyphs">OS<tspan dy="-2.55">_</tspan><tspan dy="2.55">1690</tspan></text>
<text x="7" y="453" font-size="12.3" fill="#fff" textLength="84" lengthAdjust="spacingAndGlyphs">LASCO-buffer</text>
<text x="101" y="48" font-size="12.3" fill="#fff" textLength="6" lengthAdjust="spacingAndGlyphs">4</text>
<text x="101" y="57" font-size="12.3" fill="#fff" textLength="6" lengthAdjust="spacingAndGlyphs">3</text>
<text x="101" y="66" font-size="12.3" fill="#fff" textLength="6" lengthAdjust="spacingAndGlyphs">2</text>
<text x="101" y="75" font-size="12.3" fill="#fff" textLength="6" lengthAdjust="spacingAndGlyphs">1</text>
<text x="86" y="432" font-size="11" fill="#fff" textLength="22" lengthAdjust="spacingAndGlyphs">100</text>
<text x="92.7" y="444" font-size="11" fill="#fff" textLength="15.299999999999997" lengthAdjust="spacingAndGlyphs">80</text>
<text x="92.7" y="477" font-size="11" fill="#fff" textLength="15.299999999999997" lengthAdjust="spacingAndGlyphs">20</text>
<text x="100.7" y="488" font-size="11" fill="#fff" textLength="7.299999999999997" lengthAdjust="spacingAndGlyphs">0</text>
<text x="308.6" y="518" font-size="11" fill="#fff" textLength="76.0" lengthAdjust="spacingAndGlyphs">1996/11/07</text>
<text x="391.8" y="518" font-size="11" fill="#fff" textLength="78.39999999999998" lengthAdjust="spacingAndGlyphs">23:00:00.000</text>
<text x="13.5" y="520" font-size="10.0" fill="#ff0000" textLength="12.0" lengthAdjust="spacingAndGlyphs">C1</text>
<text x="34.5" y="520" font-size="10.0" fill="#00ff00" textLength="13.299999999999997" lengthAdjust="spacingAndGlyphs">C2</text>
<text x="55.5" y="520" font-size="10.0" fill="#8ce4ec" textLength="13.5" lengthAdjust="spacingAndGlyphs">C3</text>
<text x="76.5" y="520" font-size="10.0" fill="#ffff00" textLength="13.5" lengthAdjust="spacingAndGlyphs">EIT</text>
</g>
</svg></body></html>
